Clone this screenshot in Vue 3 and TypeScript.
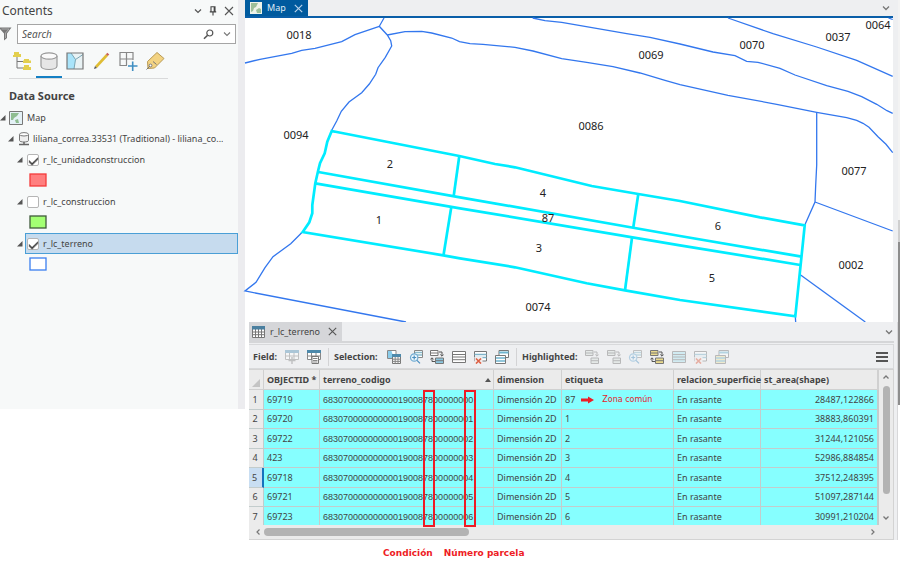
<script setup lang="ts">
import { ref } from 'vue'

interface Layer {
  name: string
  fill: string
  stroke: string
}

interface ParcelRow {
  id: string
  code: string
  tag: string
  area: string
}

interface MapLabel {
  text: string
  x: number
  y: number
}

const search = ref('')
const selectedLayer = ref('r_lc_terreno')
const visibleLayers = ref<string[]>(['r_lc_unidadconstruccion', 'r_lc_terreno'])
const currentRow = ref(4)

const layers: Layer[] = [
  { name: 'r_lc_unidadconstruccion', fill: '#ff7f7f', stroke: '#f53b3b' },
  { name: 'r_lc_construccion', fill: '#a3ff73', stroke: '#3f5a3a' },
  { name: 'r_lc_terreno', fill: '#ffffff', stroke: '#3b7ff0' },
]

// municipality + zone, sector and block zeros + section + plot + condition + unit zeros
const codePrefix = '68307' + '0'.repeat(10) + '19' + '0087' + '8' + '0'.repeat(7)
const rows: ParcelRow[] = [
  { id: '69719', code: codePrefix + '0', tag: '87', area: '28487,122866' },
  { id: '69720', code: codePrefix + '1', tag: '1', area: '38883,860391' },
  { id: '69722', code: codePrefix + '2', tag: '2', area: '31244,121056' },
  { id: '423', code: codePrefix + '3', tag: '3', area: '52986,884854' },
  { id: '69718', code: codePrefix + '4', tag: '4', area: '37512,248395' },
  { id: '69721', code: codePrefix + '5', tag: '5', area: '51097,287144' },
  { id: '69723', code: codePrefix + '6', tag: '6', area: '30991,210204' },
]

const boundaries: string[] = [
  '245,63 260,59.3 291.7,53.3 301.7,50.3 315,48.3 341.7,41.7 355,34.7 379.3,26.3',
  '384,18 379.3,26.3 387.3,35 390.7,40.7 391.7,46 385.3,57.3 378,67.7 375.7,74.3 369.3,84 361.7,92.7 349,102 341.3,111.3 336.7,121 331.7,130.3',
  '387.3,35 405,31.7 421.7,31.3 431.7,33 451.7,38 459.5,41.7 470,43.7 483,44.3 515,47.3 533,51 561.7,58.7 586.7,62.3 613,66.7 640,73 665,80.3 680,84.7 728,95.3 776.7,104.3 816.7,112.3 846.7,117.7 856.7,120.3 863,123.3 869,127.3 878,136.7 886,144.3 892.7,152.7',
  '532.7,18 545,20.7 561.7,22.3 626.7,33.7 650,37.3 680,44 713,52 735,55.7 746.7,61.3 758,62.3 780,68.3 795,75 826.7,85.7 848,91.3 861.7,96.7 876.7,104.3 887,110.7 892.7,113.3',
  '728,18 773,33.7 816.7,47 856.7,60.3 892.7,76.3',
  '888.5,18 892.7,19.5',
  '816.7,112.3 816.7,165 815.7,185 815,202 804.7,225.3',
  '815,202 892.7,231',
  '800.3,274.7 865.3,322',
  '795.3,316.7 795.7,322',
  '301.7,232.7 290.7,243.7 273,256.7 265,267.7 256,282.3 245,291 406,322',
]

const parcels: string[] = [
  '331.7,131 459.3,156 495,164 515,167.3 591.7,186 638.3,194 680,201 760,217.3 804.7,225.3 802.7,245 795.3,316.3 680,300 625,290.3 586.7,283.3 515,267.3 460,258.3 443.3,255.3 302.7,232 309.3,222.3 312.3,213.3 312.3,205 315.3,183.3 318.3,170 320,163.3 324.7,153.3 327.3,141.7 331.7,131 335,131.7',
  '318.3,172 460,197.3 680,236 801.7,256.7',
  '315.3,183.3 460,208.3 680,245.3 800.3,265',
  '459.3,156 453.7,196',
  '638.3,194 633.3,227.3',
  '451.3,207 443.5,255.3',
  '632,237.7 625,290.3',
]

const mapLabels: MapLabel[] = [
  { text: '0018', x: 299, y: 39 },
  { text: '0094', x: 296, y: 139 },
  { text: '0069', x: 651, y: 59 },
  { text: '0086', x: 591, y: 130 },
  { text: '0070', x: 752, y: 49 },
  { text: '0037', x: 838, y: 41 },
  { text: '0064', x: 878, y: 29 },
  { text: '0077', x: 854, y: 175 },
  { text: '0002', x: 851, y: 269 },
  { text: '0074', x: 538, y: 311 },
  { text: '2', x: 390, y: 168 },
  { text: '4', x: 543, y: 197 },
  { text: '87', x: 548, y: 222 },
  { text: '3', x: 539, y: 252 },
  { text: '1', x: 379, y: 224 },
  { text: '6', x: 718, y: 230 },
  { text: '5', x: 712, y: 282 },
]

const selectionTools = [
  { icon: 'attributes', label: 'Select by attributes', off: false },
  { icon: 'zoom', label: 'Zoom to selection', off: false },
  { icon: 'switch', label: 'Switch selection', off: false },
  { icon: 'all', label: 'Select all', off: false },
  { icon: 'clear', label: 'Clear selection', off: false },
  { icon: 'copy', label: 'Copy selection', off: false },
]

const highlightTools = [
  { icon: 'move', label: 'Unselect highlighted', off: true },
  { icon: 'move', label: 'Reselect highlighted', off: true },
  { icon: 'zoom', label: 'Zoom to highlighted', off: true },
  { icon: 'switch-yellow', label: 'Switch highlighted', off: false },
  { icon: 'all-blue', label: 'Highlight all', off: true },
  { icon: 'clear', label: 'Clear highlighted', off: true },
  { icon: 'copy-yellow', label: 'Copy highlighted', off: true },
]

const toolGroups = [
  { title: 'Selection:', kind: 'selection', tools: selectionTools },
  { title: 'Highlighted:', kind: 'highlighted', tools: highlightTools },
]
</script>

<template>
  <div class="page">
    <div class="workspace">
      <aside class="contents">
        <header class="contents-head">
          <h1>Contents</h1>
          <button type="button" aria-label="Pane options">
            <svg width="8" height="6" viewBox="0 0 8 6"><path d="M1 1.5 4 4.5 7 1.5" fill="none" stroke="#555" stroke-width="1.2" /></svg>
          </button>
          <button type="button" aria-label="Pin pane">
            <svg width="8" height="10" viewBox="0 0 8 10"><path d="M2 .8h4v5H2zM.8 5.9h6.4M4 6v3.6M5.2 1v5" fill="none" stroke="#444" stroke-width="1.1" /></svg>
          </button>
          <button type="button" aria-label="Close pane">
            <svg width="10" height="10" viewBox="0 0 10 10"><path d="M1 1 9 9M9 1 1 9" stroke="#555" stroke-width="1.1" /></svg>
          </button>
        </header>

        <div class="search-row">
          <svg class="funnel" width="12" height="14" viewBox="0 0 12 14"><path d="M0 .5h11.5L7 6.5V11L4 13.500V6.500L0 2z" fill="#777" /><path d="M1.500 2H9L5.500 6V11" fill="none" stroke="#aaa" /></svg>
          <div class="search-box">
            <input v-model="search" type="text" placeholder="Search" aria-label="Search layers" />
            <button type="button" aria-label="Search">
              <svg width="11" height="11" viewBox="0 0 11 11"><circle cx="6.800" cy="4" r="3" fill="none" stroke="#555" stroke-width="1.200" /><path d="M4.600 6.200 1 9.800" stroke="#555" stroke-width="1.600" /></svg>
            </button>
            <button type="button" aria-label="Search options">
              <svg width="8" height="6" viewBox="0 0 8 6"><path d="M1 1.500 4 4.500 7 1.500" fill="none" stroke="#777" stroke-width="1.100" /></svg>
            </button>
          </div>
        </div>

        <nav class="views" aria-label="List by">
          <button type="button" aria-label="List by drawing order">
            <svg width="20" height="20" viewBox="0 0 20 20"><path d="M5 6v11h6M5 10.500h6" fill="none" stroke="#777" /><path d="M2 1h5v2h2v3H1V4h1zM12 8h5v1.500h2V12h-8V9.500h1zM12 14h5v2h2v3h-8v-3h1z" fill="#e3cf4e" /></svg>
          </button>
          <button type="button" class="active" aria-label="List by data source">
            <svg width="20" height="20" viewBox="0 0 20 20"><path d="M2 5v10c0 2 3.500 3.500 8 3.500s8-1.500 8-3.500V5" fill="#e6e6e6" stroke="#999" stroke-width="1.200" /><ellipse cx="10" cy="5" rx="8" ry="3.200" fill="#fafafa" stroke="#999" stroke-width="1.200" /></svg>
          </button>
          <button type="button" aria-label="List by selection">
            <svg width="20" height="20" viewBox="0 0 20 20"><path d="M2 2h16v16H2z" fill="#e8f2f4" /><path d="M2 2h4l4.500 6.500L9 18H2z" fill="#a9e4fa" /><path d="M6 2l4.500 6.500L9 18M10.500 8.500 18 3.500" fill="none" stroke="#7aa5b3" /><path d="M2 2h16v16H2z" fill="none" stroke="#777" stroke-width="1.200" /></svg>
          </button>
          <button type="button" aria-label="List by editing">
            <svg width="20" height="20" viewBox="0 0 20 20"><path d="M4 16 15 4" stroke="#dfbd35" stroke-width="2.600" /><path d="M14.800 4.200 16.300 2.600" stroke="#c9605a" stroke-width="2.600" /><path d="M2 18l1-3 2 2z" fill="#555" /></svg>
          </button>
          <button type="button" aria-label="List by snapping">
            <svg width="20" height="20" viewBox="0 0 20 20"><path d="M15 9V1.500H2v13h7M8.500 1.500v13M2 8h13" fill="none" stroke="#888" stroke-width="1.200" /><path d="M10 15h9.500M14.700 10.500V20" stroke="#3f8ec2" stroke-width="1.600" /></svg>
          </button>
          <button type="button" aria-label="List by labeling">
            <svg width="20" height="20" viewBox="0 0 20 20"><path d="M2.500 10.500 12 1.500l7 6L9.500 17l-6.500.500z" fill="#f3d382" stroke="#b89a55" /><circle cx="5.500" cy="14.500" r="1.400" fill="#fff" stroke="#777" /><path d="M5 15 1.500 18.500M8 10.500l3.500 3" stroke="#777" /></svg>
          </button>
        </nav>

        <h2>Data Source</h2>

        <ul class="tree">
          <li class="node map-node">
            <svg class="caret" width="6" height="6" viewBox="0 0 6 6"><path d="M5.500 0v5.500H0z" fill="#555" /></svg>
            <svg width="14" height="14" viewBox="0 0 14 14"><path d="M.5.500h13v13H.5z" fill="#e4f1f6" stroke="#777" /><path d="M2 2h8L8 5 5 7 4 9 2 9zM6 9l3-1 1 4H7z" fill="#8ebd91" /></svg>
            <span>Map</span>
          </li>
          <li class="node db-node">
            <svg class="caret" width="6" height="6" viewBox="0 0 6 6"><path d="M5.500 0v5.500H0z" fill="#555" /></svg>
            <svg width="12" height="14" viewBox="0 0 12 14"><path d="M1.500 2.500v6c0 2 9 2 9 0v-6" fill="#eee" stroke="#777" /><ellipse cx="6" cy="2.300" rx="4.500" ry="1.700" fill="#fff" stroke="#777" /><path d="M6 10v2M1 12.500h10" stroke="#666" stroke-width="1.500" /></svg>
            <span class="ellipsis">liliana_correa.33531 (Traditional) - liliana_co...</span>
          </li>
          <li v-for="layer in layers" :key="layer.name">
            <div class="node layer-node">
              <svg class="caret" width="6" height="6" viewBox="0 0 6 6"><path d="M5.500 0v5.500H0z" fill="#555" /></svg>
              <label :class="{ selected: layer.name === selectedLayer }">
                <input v-model="visibleLayers" type="checkbox" :value="layer.name" />
                <span>{{ layer.name }}</span>
              </label>
            </div>
            <div class="symbol">
              <svg width="18" height="14" viewBox="0 0 18 14"><rect x="1" y="1" width="16" height="12" :fill="layer.fill" :stroke="layer.stroke" stroke-width="1.300" /></svg>
            </div>
          </li>
        </ul>
      </aside>

      <main class="views-pane">
        <section class="map-view">
          <header class="map-tabs">
            <div class="map-tab">
              <svg width="12" height="12" viewBox="0 0 12 12"><path d="M0 0h12v12H0z" fill="#eef3ea" /><path d="M1 1h7L6 5 4 6 3 9 1 10zM6 8l3-2 2 1v4H7z" fill="#9cbf99" /></svg>
              <span>Map</span>
              <button type="button" aria-label="Close map">
                <svg width="9" height="9" viewBox="0 0 9 9"><path d="M.8.800 8.200 8.200M8.200.800.800 8.200" stroke="#b9d2ea" stroke-width="1.200" /></svg>
              </button>
            </div>
            <button type="button" aria-label="View list">
              <svg width="8" height="6" viewBox="0 0 8 6"><path d="M1 1.500 4 4.500 7 1.500" fill="none" stroke="#777" stroke-width="1.300" /></svg>
            </button>
          </header>
          <svg class="map" viewBox="245 18 648 304" role="img" aria-label="Parcel map">
            <polyline v-for="line in boundaries" :key="line" class="boundary" :points="line" />
            <polyline v-for="line in parcels" :key="line" class="parcel" :points="line" />
            <text v-for="label in mapLabels" :key="label.text" :x="label.x" :y="label.y">{{ label.text }}</text>
          </svg>
        </section>

        <section class="table-view">
          <header class="table-tabs">
            <div class="table-tab">
              <svg width="13" height="12" viewBox="0 0 13 12"><path d="M.5.500h12v11H.5zM.5 6h12M.5 8.700h12M3.500 3v8.500M6.500 3v8.500M9.500 3v8.500" fill="#fff" stroke="#777" /><path d="M0 0h13v3.500H0z" fill="#4a7f9f" /></svg>
              <span>r_lc_terreno</span>
              <button type="button" aria-label="Close table">
                <svg width="9" height="9" viewBox="0 0 9 9"><path d="M.8.800 8.200 8.200M8.200.800.800 8.200" stroke="#555" stroke-width="1.100" /></svg>
              </button>
            </div>
            <button type="button" aria-label="Table list">
              <svg width="8" height="6" viewBox="0 0 8 6"><path d="M1 1.500 4 4.500 7 1.500" fill="none" stroke="#777" stroke-width="1.300" /></svg>
            </button>
          </header>

          <div class="toolbar">
            <div class="group field">
              <strong>Field:</strong>
              <div class="tools">
                <button type="button" class="off" aria-label="Add field">
                  <svg width="14" height="14" viewBox="0 0 14 14"><path d="M.5.500h13v9H.5zM.5 6h13M4.500 3v6.500M9 3v6.500" fill="#fff" stroke="#888" /><path d="M0 0h14v3H0z" fill="#5b95b8" /><path d="M7 7v7M3.500 10.500h7" stroke="#888" stroke-width="1.400" /></svg>
                </button>
                <button type="button" aria-label="Calculate field">
                  <svg width="14" height="14" viewBox="0 0 14 14"><path d="M.5.500h13v9H.5zM.5 6h13M4.500 3v6.500M9 3v6.500" fill="#fff" stroke="#888" /><path d="M0 0h14v3H0z" fill="#4d89ab" /><path d="M5 6.500h6.500v7H5z" fill="#fff" stroke="#777" /><path d="M6 8.500h4.500M6 10.500h4.500M6 12h4.500" stroke="#888" /></svg>
                </button>
              </div>
            </div>
            <div v-for="group in toolGroups" :key="group.title" class="group" :class="group.kind">
              <strong>{{ group.title }}</strong>
              <div class="tools">
                <button v-for="tool in group.tools" :key="tool.label" type="button" :class="{ off: tool.off }" :aria-label="tool.label">
                  <svg width="14" height="14" viewBox="0 0 14 14">
                    <g v-if="tool.icon === 'attributes'">
                      <path d="M.5.500H9v8H.5z" fill="#fff" stroke="#888" />
                      <path d="M1 1h3.500l1 3L5 8H1z" fill="#8accea" />
                      <path d="M5.500 4.500h8v9h-8z" fill="#f5f5f5" stroke="#777" />
                      <path d="M5 4h9v3H5z" fill="#4d89ab" />
                      <path d="M5.500 9.200h8M5.500 11.400h8M8.200 7v6.500M11 7v6.500" stroke="#888" />
                    </g>
                    <g v-else-if="tool.icon === 'zoom'">
                      <path d="M5.500.500h8v7h-8z" fill="#fff" stroke="#888" />
                      <path d="M6 2.500h7M6 5h7" stroke="#8abccc" stroke-width="1.400" />
                      <circle cx="5.200" cy="7.500" r="3.700" fill="#eaf5fb" stroke="#6faad2" stroke-width="1.200" />
                      <path d="M3.200 7.500h4M5.200 5.500v4M8 10.300l3 3" stroke="#4a8fc1" stroke-width="1.200" />
                    </g>
                    <g v-else-if="tool.icon === 'switch' || tool.icon === 'switch-yellow'">
                      <path d="M.5.500h7.500v5H.5z" :fill="tool.icon === 'switch' ? '#fff' : '#e9d98d'" stroke="#777" />
                      <path d="M.5 3H8" stroke="#777" />
                      <path d="M5.500 8h8v5.500h-8z" :fill="tool.icon === 'switch' ? '#8ac6df' : '#e9d98d'" stroke="#777" />
                      <path d="M5.500 10.700h8" stroke="#777" />
                      <path d="M9 2h3v4M10.300 4.500 12 6.200 13.700 4.500M5 11.500H2V8M.3 9.500 2 7.800 3.700 9.500" fill="none" stroke="#555" />
                    </g>
                    <g v-else-if="tool.icon === 'move'">
                      <path d="M.5.500H8v5H.5zM6 8h7.500v5.500H6z" fill="#d8e0dc" stroke="#777" />
                      <path d="M.5 3H8M6 10.700h7.500M9 2h3v4M10.300 4.500 12 6.200 13.700 4.500" fill="none" stroke="#777" />
                    </g>
                    <g v-else-if="tool.icon === 'all' || tool.icon === 'all-blue'">
                      <path d="M.5 1.500h13v11H.5z" :fill="tool.icon === 'all' ? '#fff' : '#aee7f5'" stroke="#777" />
                      <path d="M.5 4.500h13M.5 7h13M.5 9.700h13" stroke="#777" />
                    </g>
                    <g v-else-if="tool.icon === 'clear'">
                      <path d="M1.500 1.500h12v9.500h-12z" fill="#fff" stroke="#777" />
                      <path d="M1.500 4.500h12M1.500 7.500h12" stroke="#7fb3c9" stroke-width="1.400" />
                      <path d="M1.500 7h8v7h-8z" fill="#f1eded" />
                      <path d="M3 8.500 8 13.500M8 8.500 3 13.500" stroke="#dc5f43" stroke-width="1.600" />
                    </g>
                    <g v-else>
                      <path d="M4 .500h9.500v7H4z" fill="#fff" stroke="#777" />
                      <path d="M4 2.500h9.500" stroke="#6fb4ce" stroke-width="2" />
                      <path d="M.5 5.500h10v8H.5z" :fill="tool.icon === 'copy' ? '#fff' : '#f0e3a2'" stroke="#777" />
                      <path d="M1 8h9M1 11h9" stroke="#6fb4ce" stroke-width="1.500" />
                    </g>
                  </svg>
                </button>
              </div>
            </div>
            <button type="button" class="menu" aria-label="Table menu">
              <svg width="12" height="12" viewBox="0 0 12 12"><path d="M0 2h12M0 6h12M0 10h12" stroke="#555" stroke-width="2.200" /></svg>
            </button>
          </div>

          <div class="grid-frame">
            <div class="grid-clip">
              <table>
                <colgroup>
                  <col class="c-num" />
                  <col class="c-id" />
                  <col class="c-code" />
                  <col class="c-dim" />
                  <col class="c-tag" />
                  <col class="c-rel" />
                  <col class="c-area" />
                  <col />
                </colgroup>
                <thead>
                  <tr>
                    <th class="corner"><svg width="8" height="8" viewBox="0 0 8 8"><path d="M8 0v8H0z" fill="#c4c4c4" /></svg></th>
                    <th>OBJECTID *</th>
                    <th>
                      <div class="sorted">
                        terreno_codigo
                        <svg width="6" height="4" viewBox="0 0 6 4"><path d="M3 0 6 4H0z" fill="#555" /></svg>
                      </div>
                    </th>
                    <th>dimension</th>
                    <th>etiqueta</th>
                    <th>relacion_superficie</th>
                    <th>st_area(shape)</th>
                    <th class="next"></th>
                  </tr>
                </thead>
                <tbody>
                  <tr v-for="(row, index) in rows" :key="row.id" :class="{ current: index === currentRow }" @click="currentRow = index">
                    <th scope="row">{{ index + 1 }}</th>
                    <td>{{ row.id }}</td>
                    <td class="code">{{ row.code }}</td>
                    <td>Dimensión 2D</td>
                    <td>
                      <div v-if="index === 0" class="tag-note">
                        {{ row.tag }}
                        <svg width="13" height="8" viewBox="0 0 13 8"><path d="M0 2.500h7V.500L13 4 7 7.500v-2H0z" fill="#ee1c25" /></svg>
                        <em>Zona común</em>
                      </div>
                      <template v-else>{{ row.tag }}</template>
                    </td>
                    <td>En rasante</td>
                    <td class="number">{{ row.area }}</td>
                    <td></td>
                  </tr>
                </tbody>
              </table>
              <span class="mark condition"></span>
              <span class="mark parcel-number"></span>
            </div>
            <div class="v-scroll">
              <svg width="8" height="6" viewBox="0 0 8 6"><path d="M1.500 4.500 4 2 6.500 4.500" fill="none" stroke="#777" stroke-width="1.300" /></svg>
              <span class="v-thumb"></span>
              <svg width="8" height="6" viewBox="0 0 8 6"><path d="M1.500 1.500 4 4 6.500 1.500" fill="none" stroke="#777" stroke-width="1.300" /></svg>
            </div>
            <div class="h-scroll">
              <svg width="6" height="8" viewBox="0 0 6 8"><path d="M4.500 1.500 2 4 4.500 6.500" fill="none" stroke="#777" stroke-width="1.200" /></svg>
              <span class="h-thumb"></span>
              <svg width="6" height="8" viewBox="0 0 6 8"><path d="M1.500 1.500 4 4 1.500 6.500" fill="none" stroke="#777" stroke-width="1.200" /></svg>
            </div>
          </div>
        </section>

        <p class="captions"><span>Condición</span><span>Número parcela</span></p>
      </main>
      <span class="edge"></span>
    </div>
  </div>
</template>

<style>
body {
  margin: 0;
  background: #fff;
}
</style>

<style scoped>
.page {
  font-family: 'Noto Sans', 'Open Sans', sans-serif;
  font-size: 9px;
  line-height: 14px;
  color: #444;
  overflow: hidden;
}
.page * {
  box-sizing: border-box;
}
.page svg {
  display: block;
  flex: none;
}
button {
  display: flex;
  align-items: center;
  justify-content: center;
  flex: none;
  padding: 0;
  border: 0;
  background: none;
  font: inherit;
  color: inherit;
}
.workspace {
  display: flex;
  align-items: flex-start;
}

/* Contents pane */
.contents {
  flex: none;
  width: 245px;
  padding-bottom: 134px;
  border-right: 7px solid #ececef;
  background: #f7f9f9;
}
.contents-head {
  display: flex;
  align-items: center;
  gap: 7px;
  height: 22px;
  padding: 0 4px 0 2px;
}
.contents-head h1 {
  flex: 1;
  margin: 0;
  font-size: 12px;
  font-weight: 400;
}
.search-row {
  display: flex;
  align-items: center;
  gap: 5px;
  margin-top: 2px;
  padding-right: 2px;
}
.search-box {
  display: flex;
  flex: 1;
  align-items: center;
  gap: 9px;
  height: 20px;
  padding: 0 4px;
  border: 1px solid #a5a5a5;
  background: #fff;
}
.search-box input {
  flex: 1;
  min-width: 0;
  padding: 0;
  border: 0;
  outline: 0;
  background: none;
  font: italic 10px 'Noto Sans', sans-serif;
  color: #444;
}
.search-box input::placeholder {
  color: #555;
  opacity: 1;
}
.views {
  display: flex;
  width: 159px;
  margin: 6px 0 0 9px;
  border-bottom: 1px solid #d9dadb;
}
.views button {
  flex: 1;
  height: 28px;
  padding-bottom: 4px;
  border-bottom: 2px solid transparent;
}
.views .active {
  border-color: #1480c4;
}
h2 {
  margin: 10px 0 5px 9px;
  font-size: 11px;
  line-height: 14px;
}
.tree {
  margin: 0;
  padding: 0;
  list-style: none;
}
.node {
  display: flex;
  align-items: center;
  height: 21px;
}
.map-node {
  gap: 3px;
  height: 20px;
}
.map-node span {
  margin-left: 1px;
}
.db-node {
  gap: 3px;
  padding-left: 8px;
}
.db-node .caret {
  margin-right: 1px;
}
.ellipsis {
  overflow: hidden;
  white-space: nowrap;
}
.layer-node {
  gap: 2px;
  padding-left: 17px;
}
.layer-node label {
  display: flex;
  flex: 1;
  align-items: center;
  gap: 4px;
  height: 21px;
  padding-left: 1px;
  border: 1px solid transparent;
}
.layer-node .selected {
  border-color: #4a9fd6;
  background: #c6dbee;
}
.layer-node input {
  appearance: none;
  width: 12px;
  height: 12px;
  margin: 0;
  border: 1px solid #b5b5b5;
  border-radius: 2px;
  background: #fff;
}
.layer-node input:checked::before {
  content: '';
  display: block;
  width: 8px;
  height: 4px;
  margin: 2px 0 0 1px;
  border-bottom: 1px solid #333;
  border-left: 1px solid #333;
  box-shadow: -1px 1px 0 -0px #777;
  rotate: -45deg;
}
.symbol {
  display: flex;
  align-items: center;
  height: 21px;
  padding: 0 0 2px 29px;
}

/* Map view */
.views-pane {
  flex: 1;
  min-width: 0;
}
.map-view {
  padding-right: 5px;
  background: #eeeff1;
}
.map-tabs {
  display: flex;
  justify-content: space-between;
  height: 18px;
  padding-right: 3px;
  border-bottom: 2px solid #0a5ea8;
}
.map-tab {
  display: flex;
  align-items: center;
  gap: 5px;
  padding: 0 5px;
  background: #005a9e;
  color: #dfeaf5;
}
.map-tab button {
  margin-left: 3px;
}
.map {
  width: 100%;
  overflow: visible;
  background: #fff;
}
.map text {
  font-family: 'Noto Sans', sans-serif;
  font-size: 11px;
  text-anchor: middle;
  fill: #222;
}
.boundary {
  fill: none;
  stroke: #3377ee;
  stroke-width: 1.3;
}
.parcel {
  fill: none;
  stroke: #00ecff;
  stroke-width: 2.7;
}

/* Attribute table */
.table-view {
  position: relative;
  margin-left: 4px;
  padding-right: 3px;
  border-right: 1px solid #d8d8da;
  background: #eeeff1;
}
.table-tabs {
  display: flex;
  justify-content: space-between;
  height: 21px;
  padding-right: 1px;
  border-bottom: 2px solid #d5d6d8;
}
.table-tab {
  display: flex;
  align-items: center;
  gap: 5px;
  padding: 0 5px 0 3px;
  background: #d5d6d9;
}
.table-tab button {
  margin-left: 3px;
}
.toolbar {
  display: flex;
  align-items: center;
  height: 25px;
  margin-top: 1px;
  padding: 0 5px 0 4px;
  border: 1px solid #d8d9db;
  border-left: 0;
}
.toolbar strong {
  color: #444;
}
.group {
  display: flex;
  align-items: center;
  justify-content: space-between;
  height: 18px;
  padding-right: 7px;
}
.group + .group {
  padding-left: 5px;
  border-left: 1px solid #d3d3d5;
}
.tools {
  display: flex;
  justify-content: space-between;
}
.off {
  opacity: 0.45;
}
.field {
  width: 75px;
}
.field .tools {
  width: 36px;
}
.selection {
  width: 188px;
}
.selection .tools {
  width: 122px;
}
.highlighted {
  width: 220px;
}
.highlighted .tools {
  width: 144px;
}
.menu {
  margin-left: auto;
}
.grid-frame {
  display: grid;
  grid-template-columns: 1fr 14px;
  grid-template-rows: 155px 14px;
  border: solid #d3d3d3;
  border-width: 1px 1px 1px 0;
  background: #ebebeb;
}
.grid-clip {
  position: relative;
}
.grid-clip table {
  clip-path: inset(0 0 2px 0);
}
table {
  width: 100%;
  table-layout: fixed;
  border-spacing: 0;
}
.c-num {
  width: 15px;
}
.c-id {
  width: 56px;
}
.c-code {
  width: 174px;
}
.c-dim {
  width: 68px;
}
.c-tag {
  width: 112px;
}
.c-rel {
  width: 87px;
}
.c-area {
  width: 117px;
}
th,
td {
  height: 19px;
  padding: 0 0 0 3px;
  border: solid #c3cccc;
  border-width: 0 1px 1px 0;
  text-align: left;
  white-space: nowrap;
}
tbody tr:nth-child(odd) > * {
  height: 20px;
}
td {
  background: #86ffff;
}
th {
  background: #ebebeb;
}
thead th {
  height: 20px;
  border-color: #d0d0d0;
}
tbody th {
  padding: 0 2px 0 0;
  font-weight: 400;
  text-align: center;
}
.current th {
  border-right: 2px solid #1573bd;
  background: #c9def2;
}
.corner svg {
  margin-top: 6px;
}
thead .next {
  background: #c9def2;
}
.sorted {
  display: flex;
  align-items: center;
  justify-content: space-between;
  padding-right: 2px;
}
.code {
  font-family: 'Liberation Sans', sans-serif;
}
td.number {
  padding-right: 3px;
  text-align: right;
}
.tag-note {
  display: flex;
  align-items: center;
  gap: 6px;
}
.tag-note em {
  margin-left: 2px;
  font: 8px 'DejaVu Sans', sans-serif;
  color: #e3222b;
}
.mark {
  position: absolute;
  top: 20px;
  bottom: -2px;
  width: 12px;
  border: 2px solid #ee1c25;
}
.condition {
  left: 174px;
}
.parcel-number {
  left: 215px;
}
.v-scroll {
  display: flex;
  flex-direction: column;
  align-items: center;
  padding: 4px 0;
}
.v-thumb {
  flex: none;
  width: 7px;
  height: 108px;
  margin: 6px 0 auto;
  border-radius: 4px;
  background: #b3b3b3;
}
.h-scroll {
  display: flex;
  align-items: center;
  padding: 0 3px 0 6px;
}
.h-thumb {
  width: 33%;
  height: 8px;
  margin: 0 auto 0 3px;
  border-radius: 4px;
  background: #b3b3b3;
}
.captions {
  display: flex;
  gap: 11px;
  margin: 6px 0 0 138px;
  font: bold 9px/14px 'DejaVu Sans', sans-serif;
  color: #ee1c25;
}
.edge {
  flex: none;
  width: 2px;
  height: 405px;
  background: linear-gradient(#f3f3f3 220px, #cfcfcf 220px 242px, #8d8d8d 242px);
}
</style>
